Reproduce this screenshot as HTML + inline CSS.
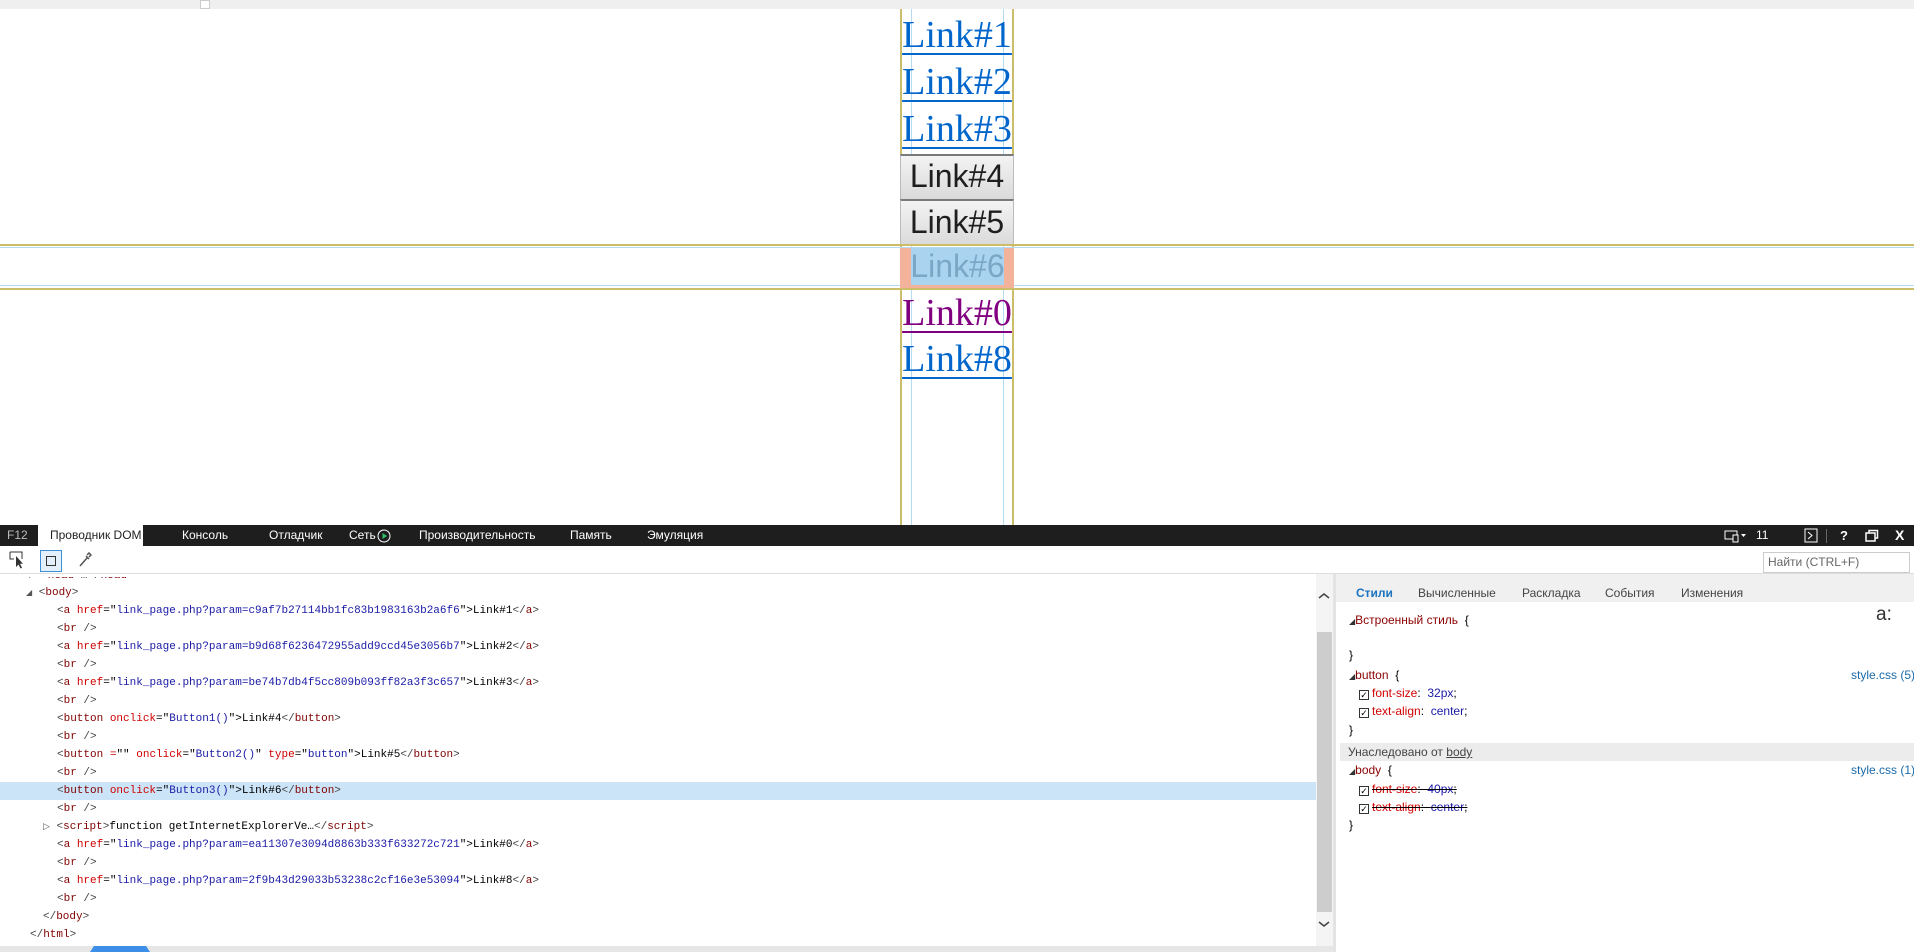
<!DOCTYPE html>
<html><head><meta charset="utf-8"><style>
*{margin:0;padding:0;box-sizing:border-box}
body{width:1914px;height:952px;position:relative;overflow:hidden;background:#fff;font-family:"Liberation Sans",sans-serif}
.abs{position:absolute}
.lnk{position:absolute;left:900px;width:114px;text-align:center;font-family:"Liberation Serif",serif;font-size:38px;line-height:46px;color:#0066cc;text-decoration:underline;text-decoration-thickness:2px;text-underline-offset:6px;white-space:nowrap}
.btn{position:absolute;left:900px;width:114px;text-align:center;font-size:32px;color:#1e1e1e;background:linear-gradient(#f3f3f3,#dadada);border-top:2px solid #7a7a7a;border-left:1px solid #bbb;border-right:1px solid #bbb}
.tab{position:absolute;top:525px;height:21px;line-height:21px;font-size:12px;color:#fff}
.dom{position:absolute;font-family:"Liberation Mono",monospace;font-size:11px;line-height:18px;white-space:pre;color:#000}
.t{color:#800000}.b{color:#444}.at{color:#d00000}.v{color:#1a1aa6}
.st{position:absolute;font-size:12px;line-height:18px;white-space:nowrap}
.sel{color:#8b0000}.pn{color:#d00000}.pv{color:#1a1aa6}
.cb{display:inline-block;width:10px;height:10px;border:1px solid #333;vertical-align:-1px;margin-right:3px;font-size:9px;line-height:8px;text-align:center}
</style></head><body>
<div class="abs" style="left:0;top:0;width:1914px;height:9px;background:#efefef"></div>
<div class="abs" style="left:200px;top:0;width:10px;height:9px;border:1px solid #ccc;background:#fff"></div>

<div class="abs" style="left:900px;top:9px;width:2px;height:516px;background:#cbbd6a"></div>
<div class="abs" style="left:1012px;top:9px;width:2px;height:516px;background:#cbbd6a"></div>
<div class="abs" style="left:911px;top:9px;width:1px;height:516px;background:#b5dbf3"></div>
<div class="abs" style="left:1003px;top:9px;width:1px;height:516px;background:#b5dbf3"></div>

<div class="lnk" style="top:12px">Link#1</div>
<div class="lnk" style="top:59px">Link#2</div>
<div class="lnk" style="top:106px">Link#3</div>
<div class="btn" style="top:154px;height:45px;line-height:41px">Link#4</div>
<div class="btn" style="top:199px;height:46px;line-height:42px">Link#5</div>

<div class="abs" style="left:0;top:244px;width:1914px;height:2px;background:#cbbd6a"></div>
<div class="abs" style="left:0;top:247px;width:1914px;height:1px;background:#b5dbf3"></div>
<div class="abs" style="left:0;top:285px;width:1914px;height:1px;background:#b5dbf3"></div>
<div class="abs" style="left:0;top:288px;width:1914px;height:2px;background:#cbbd6a"></div>
<div class="abs" style="left:900px;top:248px;width:114px;height:40px;background:#f3b29a"></div>
<div class="abs" style="left:911px;top:248px;width:93px;height:37px;background:#a9d3ef;text-align:center;font-size:32px;line-height:37px;color:#7ba7c6;white-space:nowrap;overflow:visible"><span style="margin-left:-10px;margin-right:-10px">Link#6</span></div>

<div class="lnk" style="top:290px;color:#800080">Link#0</div>
<div class="lnk" style="top:336px">Link#8</div>

<div class="abs" style="left:0;top:525px;width:1914px;height:21px;background:#1e1e1e"></div>
<div class="abs" style="left:38px;top:525px;width:105px;height:21px;background:#fff"></div>
<div class="tab" style="left:7px;color:#bbb">F12</div>
<div class="tab" style="left:50px;color:#222">Проводник DOM</div>
<div class="tab" style="left:182px">Консоль</div>
<div class="tab" style="left:269px">Отладчик</div>
<div class="tab" style="left:349px">Сеть</div>
<svg class="abs" style="left:377px;top:529px" width="14" height="14"><circle cx="7" cy="7" r="6" fill="none" stroke="#fff" stroke-width="1"/><path d="M5.5 4 L10 7 L5.5 10Z" fill="#2fc06a"/></svg>
<div class="tab" style="left:419px">Производительность</div>
<div class="tab" style="left:570px">Память</div>
<div class="tab" style="left:647px">Эмуляция</div>
<svg class="abs" style="left:1724px;top:529px" width="24" height="14"><rect x="1" y="2" width="12" height="8" fill="none" stroke="#fff"/><rect x="9" y="6" width="5" height="7" fill="#1e1e1e" stroke="#fff"/><path d="M17 5h5l-2.5 3z" fill="#fff"/></svg>
<div class="tab" style="left:1756px;font-size:12px">11</div>
<svg class="abs" style="left:1804px;top:528px" width="14" height="15"><rect x="1" y="1" width="12" height="13" fill="none" stroke="#fff"/><path d="M4 4l4 3.5-4 3.5" fill="none" stroke="#fff"/></svg>
<div class="abs" style="left:1826px;top:529px;width:1px;height:14px;background:#666"></div>
<div class="tab" style="left:1840px;font-weight:bold;font-size:13px">?</div>
<svg class="abs" style="left:1865px;top:529px" width="14" height="14"><rect x="1" y="4" width="9" height="8" fill="none" stroke="#fff" stroke-width="1.5"/><path d="M4 4V1.5h8.5V9H10" fill="none" stroke="#fff" stroke-width="1.5"/></svg>
<div class="tab" style="left:1895px;font-weight:bold;font-size:14px">X</div>

<div class="abs" style="left:0;top:573px;width:1914px;height:1px;background:#ddd"></div>
<svg class="abs" style="left:9px;top:551px" width="16" height="18"><path d="M1 1h12v7M1 1v7h4" fill="none" stroke="#333"/><path d="M7 5v11l2.5-2.5 2 4 1.5-.8-2-4H14Z" fill="#333"/></svg>
<div class="abs" style="left:40px;top:550px;width:22px;height:22px;border:1px solid #3c8ed8;background:#e3effa"></div>
<div class="abs" style="left:46px;top:556px;width:10px;height:10px;border:1.5px solid #333"></div>
<svg class="abs" style="left:78px;top:552px" width="14" height="16"><path d="M2 14l7-8M8 4l3 3M9 3l2-2 2 2-2 2" fill="none" stroke="#555" stroke-width="1.5"/></svg>
<div class="abs" style="left:1763px;top:552px;width:147px;height:21px;border:1px solid #ccc;font-size:12px;line-height:19px;padding-left:4px;color:#666">Найти (CTRL+F)</div>

<div class="abs" style="left:0;top:782px;width:1316px;height:18px;background:#cce4f7"></div>
<div class="dom" style="left:29px;top:567px;color:#555;clip-path:inset(10px 0 0 0)">▸ <span class="b">&lt;</span><span class="t">head</span><span class="b">&gt;</span>…<span class="b">&lt;/</span><span class="t">head</span><span class="b">&gt;</span></div>
<div class="dom" style="left:26px;top:584px"><span style="font-size:8px;color:#555">◢</span> <span class="b">&lt;</span><span class="t">body</span><span class="b">&gt;</span></div>
<div class="dom" style="left:57px;top:602px"><span class="b">&lt;</span><span class="t">a</span> <span class="at">href</span>="<span class="v">link_page.php?param=c9af7b27114bb1fc83b1983163b2a6f6</span>"&gt;Link#1<span class="b">&lt;/</span><span class="t">a</span><span class="b">&gt;</span></div>
<div class="dom" style="left:57px;top:620px"><span class="b">&lt;</span><span class="t">br</span> <span class="b">/&gt;</span></div>
<div class="dom" style="left:57px;top:638px"><span class="b">&lt;</span><span class="t">a</span> <span class="at">href</span>="<span class="v">link_page.php?param=b9d68f6236472955add9ccd45e3056b7</span>"&gt;Link#2<span class="b">&lt;/</span><span class="t">a</span><span class="b">&gt;</span></div>
<div class="dom" style="left:57px;top:656px"><span class="b">&lt;</span><span class="t">br</span> <span class="b">/&gt;</span></div>
<div class="dom" style="left:57px;top:674px"><span class="b">&lt;</span><span class="t">a</span> <span class="at">href</span>="<span class="v">link_page.php?param=be74b7db4f5cc809b093ff82a3f3c657</span>"&gt;Link#3<span class="b">&lt;/</span><span class="t">a</span><span class="b">&gt;</span></div>
<div class="dom" style="left:57px;top:692px"><span class="b">&lt;</span><span class="t">br</span> <span class="b">/&gt;</span></div>
<div class="dom" style="left:57px;top:710px"><span class="b">&lt;</span><span class="t">button</span> <span class="at">onclick</span>="<span class="v">Button1()</span>"&gt;Link#4<span class="b">&lt;/</span><span class="t">button</span><span class="b">&gt;</span></div>
<div class="dom" style="left:57px;top:728px"><span class="b">&lt;</span><span class="t">br</span> <span class="b">/&gt;</span></div>
<div class="dom" style="left:57px;top:746px"><span class="b">&lt;</span><span class="t">button</span> <span class="at">=</span>"<span class="v"></span>" <span class="at">onclick</span>="<span class="v">Button2()</span>" <span class="at">type</span>="<span class="v">button</span>"&gt;Link#5<span class="b">&lt;/</span><span class="t">button</span><span class="b">&gt;</span></div>
<div class="dom" style="left:57px;top:764px"><span class="b">&lt;</span><span class="t">br</span> <span class="b">/&gt;</span></div>
<div class="dom" style="left:57px;top:782px"><span class="b">&lt;</span><span class="t">button</span> <span class="at">onclick</span>="<span class="v">Button3()</span>"&gt;Link#6<span class="b">&lt;/</span><span class="t">button</span><span class="b">&gt;</span></div>
<div class="dom" style="left:57px;top:800px"><span class="b">&lt;</span><span class="t">br</span> <span class="b">/&gt;</span></div>
<div class="dom" style="left:43px;top:818px"><span style="font-size:9px;color:#555">▷</span> <span class="b">&lt;</span><span class="t">script</span><span class="b">&gt;</span>function getInternetExplorerVe…<span class="b">&lt;/</span><span class="t">script</span><span class="b">&gt;</span></div>
<div class="dom" style="left:57px;top:836px"><span class="b">&lt;</span><span class="t">a</span> <span class="at">href</span>="<span class="v">link_page.php?param=ea11307e3094d8863b333f633272c721</span>"&gt;Link#0<span class="b">&lt;/</span><span class="t">a</span><span class="b">&gt;</span></div>
<div class="dom" style="left:57px;top:854px"><span class="b">&lt;</span><span class="t">br</span> <span class="b">/&gt;</span></div>
<div class="dom" style="left:57px;top:872px"><span class="b">&lt;</span><span class="t">a</span> <span class="at">href</span>="<span class="v">link_page.php?param=2f9b43d29033b53238c2cf16e3e53094</span>"&gt;Link#8<span class="b">&lt;/</span><span class="t">a</span><span class="b">&gt;</span></div>
<div class="dom" style="left:57px;top:890px"><span class="b">&lt;</span><span class="t">br</span> <span class="b">/&gt;</span></div>
<div class="dom" style="left:43px;top:908px"><span class="b">&lt;/</span><span class="t">body</span><span class="b">&gt;</span></div>
<div class="dom" style="left:30px;top:926px"><span class="b">&lt;/</span><span class="t">html</span><span class="b">&gt;</span></div>

<div class="abs" style="left:0;top:946px;width:1333px;height:6px;background:#e6e6e6"></div>
<div class="abs" style="left:90px;top:946px;width:60px;height:6px;background:#3c8ee6;clip-path:polygon(4px 0,56px 0,60px 100%,0 100%)"></div>

<div class="abs" style="left:1316px;top:574px;width:17px;height:372px;background:#f4f4f4"></div>
<div class="abs" style="left:1317px;top:632px;width:15px;height:280px;background:#cdcdcd"></div>
<svg class="abs" style="left:1318px;top:592px" width="12" height="8"><path d="M1 6l5-4 5 4" fill="none" stroke="#444" stroke-width="1.5"/></svg>
<svg class="abs" style="left:1318px;top:920px" width="12" height="8"><path d="M1 2l5 4 5-4" fill="none" stroke="#444" stroke-width="1.5"/></svg>
<div class="abs" style="left:1333px;top:574px;width:3px;height:378px;background:#e3e3e3"></div>

<div class="abs" style="left:1336px;top:574px;width:578px;height:28px;background:#f0f0f0"></div>
<div class="st" style="left:1356px;top:584px;color:#1a73c0;font-weight:bold">Стили</div>
<div class="st" style="left:1418px;top:584px;color:#444">Вычисленные</div>
<div class="st" style="left:1522px;top:584px;color:#444">Раскладка</div>
<div class="st" style="left:1605px;top:584px;color:#444">События</div>
<div class="st" style="left:1681px;top:584px;color:#444">Изменения</div>

<div class="st" style="left:1349px;top:611px"><span style="font-size:8px;color:#333">◢</span><span class="sel">Встроенный стиль</span> &nbsp;{</div>
<div class="st" style="left:1876px;top:606px;font-size:19px;color:#333">a:</div>
<div class="st" style="left:1349px;top:646px">}</div>
<div class="st" style="left:1349px;top:666px"><span style="font-size:8px;color:#333">◢</span><span class="sel">button</span> &nbsp;{</div>
<div class="st" style="left:1851px;top:666px;color:#1a6aa8">style.css (5)</div>
<div class="st" style="left:1359px;top:684px"><span class="cb">✓</span><span class="pn">font-size</span>: &nbsp;<span class="pv">32px</span>;</div>
<div class="st" style="left:1359px;top:702px"><span class="cb">✓</span><span class="pn">text-align</span>: &nbsp;<span class="pv">center</span>;</div>
<div class="st" style="left:1349px;top:721px">}</div>
<div class="abs" style="left:1340px;top:743px;width:574px;height:18px;background:#ececec"></div>
<div class="st" style="left:1348px;top:743px;color:#444">Унаследовано от <u>body</u></div>
<div class="st" style="left:1349px;top:761px"><span style="font-size:8px;color:#333">◢</span><span class="sel">body</span> &nbsp;{</div>
<div class="st" style="left:1851px;top:761px;color:#1a6aa8">style.css (1)</div>
<div class="st" style="left:1359px;top:780px"><span class="cb">✓</span><s><span class="pn">font-size</span>: &nbsp;<span class="pv">40px</span>;</s></div>
<div class="st" style="left:1359px;top:798px"><span class="cb">✓</span><s><span class="pn">text-align</span>: &nbsp;<span class="pv">center</span>;</s></div>
<div class="st" style="left:1349px;top:816px">}</div>
</body></html>
